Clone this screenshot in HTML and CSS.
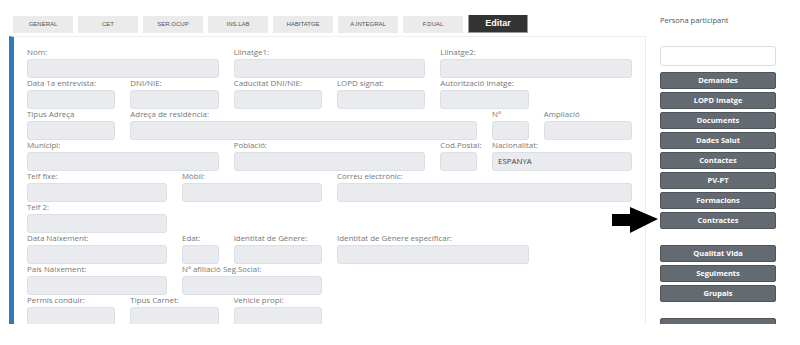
FILE: index.html
```html
<!DOCTYPE html>
<html lang="ca">
<head>
  <meta charset="UTF-8">
  <title>Persona participant</title>
  <link rel="stylesheet" href="styles.css">
</head>
<body>
  <div class="page">
    <div class="main">
      <nav class="tabs">
        <span class="tab">GENERAL</span>
        <span class="tab">CET</span>
        <span class="tab">SER.OCUP</span>
        <span class="tab">INS.LAB</span>
        <span class="tab">HABITATGE</span>
        <span class="tab">A.INTEGRAL</span>
        <span class="tab">F.DUAL</span>
        <span class="tab tab-edit">Editar</span>
      </nav>

      <section class="panel">
        <div class="form-row">
          <div class="field span-4"><label>Nom:</label><div class="input"></div></div>
          <div class="field span-4"><label>Llinatge1:</label><div class="input"></div></div>
          <div class="field span-4"><label>Llinatge2:</label><div class="input"></div></div>
        </div>
        <div class="form-row">
          <div class="field span-2"><label>Data 1a entrevista:</label><div class="input"></div></div>
          <div class="field span-2"><label>DNI/NIE:</label><div class="input"></div></div>
          <div class="field span-2"><label>Caducitat DNI/NIE:</label><div class="input"></div></div>
          <div class="field span-2"><label>LOPD signat:</label><div class="input"></div></div>
          <div class="field span-2"><label>Autorització Imatge:</label><div class="input"></div></div>
        </div>
        <div class="form-row">
          <div class="field span-2"><label>Tipus Adreça</label><div class="input"></div></div>
          <div class="field span-7"><label>Adreça de residència:</label><div class="input"></div></div>
          <div class="field span-1"><label>Nº</label><div class="input"></div></div>
          <div class="field span-2"><label>Ampliació</label><div class="input"></div></div>
        </div>
        <div class="form-row">
          <div class="field span-4"><label>Municipi:</label><div class="input"></div></div>
          <div class="field span-4"><label>Població:</label><div class="input"></div></div>
          <div class="field span-1"><label>Cod.Postal:</label><div class="input"></div></div>
          <div class="field span-3"><label>Nacionalitat:</label><div class="input">ESPANYA</div></div>
        </div>
        <div class="form-row">
          <div class="field span-3"><label>Telf fixe:</label><div class="input"></div></div>
          <div class="field span-3"><label>Mòbil:</label><div class="input"></div></div>
          <div class="field span-6"><label>Correu electrònic:</label><div class="input"></div></div>
        </div>
        <div class="form-row">
          <div class="field span-3"><label>Telf 2:</label><div class="input"></div></div>
        </div>
        <div class="form-row">
          <div class="field span-3"><label>Data Naixement:</label><div class="input"></div></div>
          <div class="field span-1"><label>Edat:</label><div class="input"></div></div>
          <div class="field span-2"><label>Identitat de Gènere:</label><div class="input"></div></div>
          <div class="field span-4"><label>Identitat de Gènere especificar:</label><div class="input"></div></div>
        </div>
        <div class="form-row">
          <div class="field span-3"><label>País Naixement:</label><div class="input"></div></div>
          <div class="field span-3"><label>Nº afiliació Seg.Social:</label><div class="input"></div></div>
        </div>
        <div class="form-row">
          <div class="field span-2"><label>Permís conduir:</label><div class="input"></div></div>
          <div class="field span-2"><label>Tipus Carnet:</label><div class="input"></div></div>
          <div class="field span-2"><label>Vehicle propi:</label><div class="input"></div></div>
        </div>
      </section>
    </div>

    <aside class="sidebar">
      <p class="sidebar-title">Persona participant</p>
      <div class="search-box"></div>
      <div class="btn-group">
        <span class="side-btn">Demandes</span>
        <span class="side-btn">LOPD Imatge</span>
        <span class="side-btn">Documents</span>
        <span class="side-btn">Dades Salut</span>
        <span class="side-btn">Contactes</span>
        <span class="side-btn">PV-PT</span>
        <span class="side-btn">Formacions</span>
        <span class="side-btn">Contractes</span>
      </div>
      <div class="btn-group">
        <span class="side-btn">Qualitat Vida</span>
        <span class="side-btn">Seguiments</span>
        <span class="side-btn">Grupals</span>
      </div>
      <div class="btn-group">
        <span class="side-btn">Històric</span>
      </div>
    </aside>

    <!-- pointer to Contractes -->
    <svg class="arrow" width="46" height="28" viewBox="0 0 46 28">
      <polygon points="0,7 18,7 18,0 46,12 18,26 18,19 0,19" fill="#000"/>
    </svg>
  </div>
</body>
</html>
```

FILE: styles.css
```css
body {
  margin: 0;
  background-color: #fff;
  font-family: "Open Sans", Arial, sans-serif;
  color: #666;
}

.page {
  position: relative;
  display: flex;
  height: 324px;
  overflow: hidden;
}

.main {
  width: 637px;
  margin-left: 9px;
  flex-shrink: 0;
}

.tabs {
  display: flex;
  gap: 5px;
  padding: 16px 0 0 4px;
  height: 17px;
}

.tab {
  width: 60px;
  height: 17px;
  background-color: #ebebeb;
  font-family: Arial, "Liberation Sans", sans-serif;
  font-size: 6px;
  color: #555;
  text-align: center;
  line-height: 17px;
}

.tab-edit {
  box-sizing: border-box;
  height: 18px;
  margin-top: -1px;
  background-color: #333;
  border: 1px solid #999;
  border-top: none;
  color: #fff;
  font-weight: bold;
  font-size: 9px;
  line-height: 17px;
}

.panel {
  margin-top: 3px;
  height: 320px;
  border: 1px solid #eee;
  border-left: 5px solid #337ab7;
  padding: 10px 13px 0 13px;
  box-sizing: border-box;
}

.form-row {
  display: grid;
  grid-template-columns: repeat(12, minmax(0, 1fr));
  column-gap: 15px;
}

.span-1 { grid-column: span 1; }
.span-2 { grid-column: span 2; }
.span-3 { grid-column: span 3; }
.span-4 { grid-column: span 4; }
.span-6 { grid-column: span 6; }
.span-7 { grid-column: span 7; }

.field label {
  display: block;
  height: 12px;
  font-size: 7.9px;
  line-height: 10px;
  color: #777;
  white-space: nowrap;
}

.input {
  box-sizing: border-box;
  height: 19px;
  background-color: #e9ebee;
  border: 1px solid #dcdfe3;
  border-radius: 3px;
  padding-left: 5px;
  font-size: 7.9px;
  line-height: 17px;
  color: #444;
}

.sidebar {
  width: 116px;
  margin-left: 14px;
  padding-top: 13px;
  flex-shrink: 0;
}

.sidebar-title {
  margin: 0;
  font-size: 7.5px;
  line-height: 14px;
  color: #555;
}

.search-box {
  box-sizing: border-box;
  height: 20px;
  margin-top: 19px;
  border: 1px solid #ddd;
  border-radius: 3px;
  background-color: #fff;
}

.btn-group {
  display: flex;
  flex-direction: column;
  gap: 3px;
  margin-top: 6px;
}

.btn-group + .btn-group {
  margin-top: 16px;
}

.side-btn {
  box-sizing: border-box;
  height: 17px;
  background-color: #646a72;
  border: 1px solid #50555c;
  border-radius: 2px;
  color: #fff;
  font-size: 7.5px;
  font-weight: bold;
  text-align: center;
  line-height: 15px;
}

.arrow {
  position: absolute;
  left: 612px;
  top: 207px;
}
```
